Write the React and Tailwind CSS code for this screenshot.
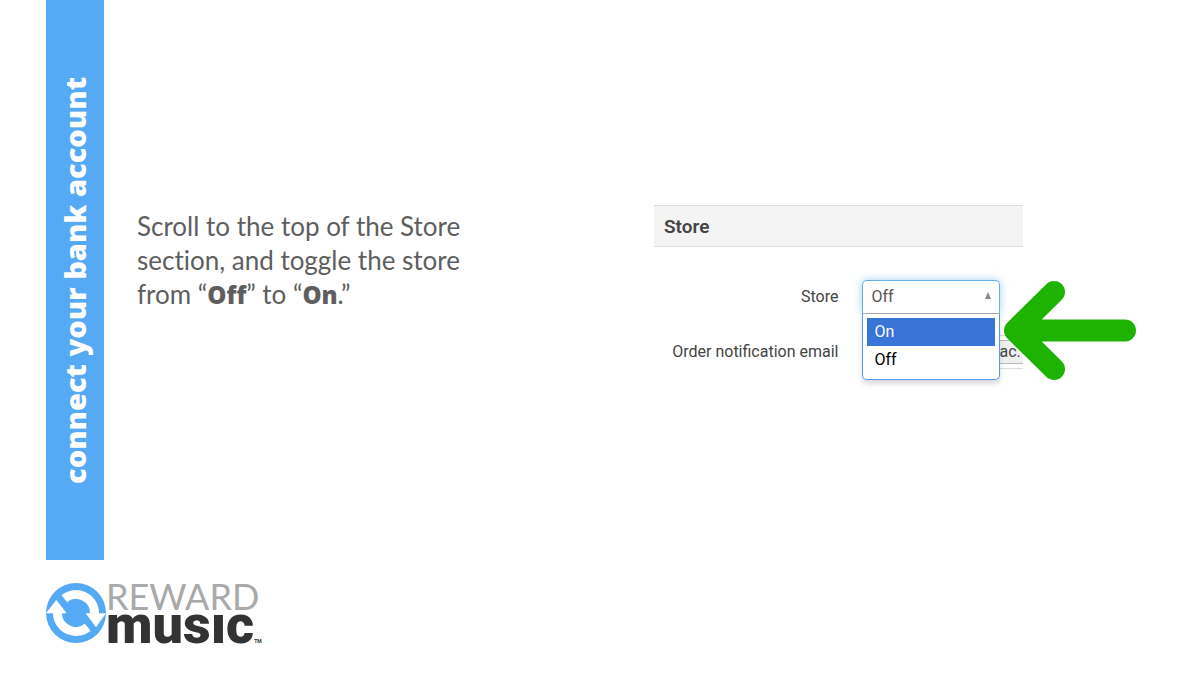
import { useState } from 'react';

const options = ['On', 'Off'];

function LogoMark() {
    return (
        <svg viewBox="0 0 180 180" className="w-[60px] h-[60px] shrink-0" aria-hidden="true">
            <circle cx="90" cy="90" r="90" fill="#55a9f5" />
            <g fill="none" stroke="#fff" strokeWidth="27">
                <path d="M55 47 A55.5 55.5 0 0 1 145.5 92" />
                <path d="M125 133 A55.5 55.5 0 0 1 34.5 88" />
            </g>
            <path d="M119 91 H180 L150 133 Z" fill="#fff" />
            <path d="M0 91 H62 L31 51 Z" fill="#fff" />
        </svg>
    );
}

function Logo() {
    return (
        <footer className="flex items-start h-[115px] pt-[23px]">
            <LogoMark />
            <div className="-mt-1">
                <p className="font-[Lato,sans-serif] text-[36px] leading-[34px] text-[#a9a9a9]">REWARD</p>
                {/* wordmark uses a dotless i */}
                <p className="font-[Roboto,sans-serif] text-[54px] leading-[24px] font-black text-[#333335]" aria-label="music">
                    musıc<span className="text-[5px] font-bold">TM</span>
                </p>
            </div>
        </footer>
    );
}

function StoreSelect() {
    const [value, setValue] = useState('Off');
    const [active, setActive] = useState('On');

    return (
        <div className="relative z-10 w-[138px] h-[34px] shrink-0">
            <select
                id="store"
                value={value}
                onChange={(e) => setValue(e.target.value)}
                className="appearance-none w-full h-full px-[9px] bg-white text-[#555] border border-[#66afe9] border-b-[#aaa] rounded-t-[5px] shadow-[0_0_8px_rgba(102,175,233,0.6)]"
            >
                {options.map((option) => (
                    <option key={option}>{option}</option>
                ))}
            </select>
            <svg viewBox="0 0 8 7" className="absolute right-2 top-3 w-2 h-[7px]" aria-hidden="true">
                <path d="M4 0 L7 7 H1 Z" fill="#888" />
            </svg>
            <div className="absolute top-full left-0 w-full h-[66px] p-1 bg-white border border-t-0 border-[#5897fb] rounded-b-[5px] shadow-[0_4px_5px_rgba(0,0,0,0.15)]">
                {options.map((option) => (
                    <button
                        key={option}
                        type="button"
                        onMouseEnter={() => setActive(option)}
                        onClick={() => setValue(option)}
                        className={`block w-full h-7 px-2 text-left ${active === option ? 'bg-[#3875d7] text-white' : 'text-black'}`}
                    >
                        {option}
                    </button>
                ))}
            </div>
            <svg viewBox="0 0 132 100" className="absolute left-full top-0 ml-1 w-[132px] h-[100px]" aria-hidden="true">
                <path
                    d="M50 12 L11 50.5 L50 89 M11 50.5 H121"
                    fill="none"
                    stroke="#1eb300"
                    strokeWidth="22"
                    strokeLinecap="round"
                    strokeLinejoin="round"
                />
            </svg>
        </div>
    );
}

function StorePanel() {
    return (
        <section className="font-[Roboto,sans-serif] text-[16px] text-[#444]">
            <h2 className="h-[42px] px-[10px] leading-[42px] text-[19px] font-semibold bg-[#f4f4f4] border-y border-[#ddd]">
                Store
            </h2>
            <div className="flex items-center mt-[33px]">
                <label htmlFor="store" className="w-1/2 mr-[23px] text-right">Store</label>
                <StoreSelect />
            </div>
            <div className="flex items-center mt-[21px]">
                <label htmlFor="email" className="w-1/2 mr-[23px] shrink-0 text-right">Order notification email</label>
                <div className="flex-1 min-w-0 py-[4px] border-y border-[#ddd]">
                    <input
                        id="email"
                        type="email"
                        defaultValue="ac."
                        className="block w-full h-6 pl-[138px] bg-[#f0f0f0] border-y border-[#bbb]"
                    />
                </div>
            </div>
        </section>
    );
}

export default function App() {
    return (
        <div className="flex flex-col min-h-screen pl-[46px] bg-white">
            <div className="flex flex-1">
                <header className="flex items-center justify-center w-[58px] bg-[#55a9f5]">
                    <h1 className="[writing-mode:vertical-rl] rotate-180 whitespace-nowrap font-['Open_Sans',sans-serif] text-[29px] font-extrabold text-white">
                        connect your bank account
                    </h1>
                </header>
                <main className="grid flex-1 grid-cols-2 gap-1 pt-[205px]">
                    <p className="pt-1 pl-[33px] max-w-[380px] font-[Lato,sans-serif] text-[26px] leading-[34px] text-[#5e5e5e] [font-variant-ligatures:none]">
                        Scroll to the top of the Store section, and toggle the store from “
                        <strong className="font-['Open_Sans',sans-serif] text-[24px] font-extrabold">Off</strong>” to “
                        <strong className="font-['Open_Sans',sans-serif] text-[24px] font-extrabold">On</strong>.”
                    </p>
                    <div className="pr-[177px]">
                        <StorePanel />
                    </div>
                </main>
            </div>
            <Logo />
        </div>
    );
}
